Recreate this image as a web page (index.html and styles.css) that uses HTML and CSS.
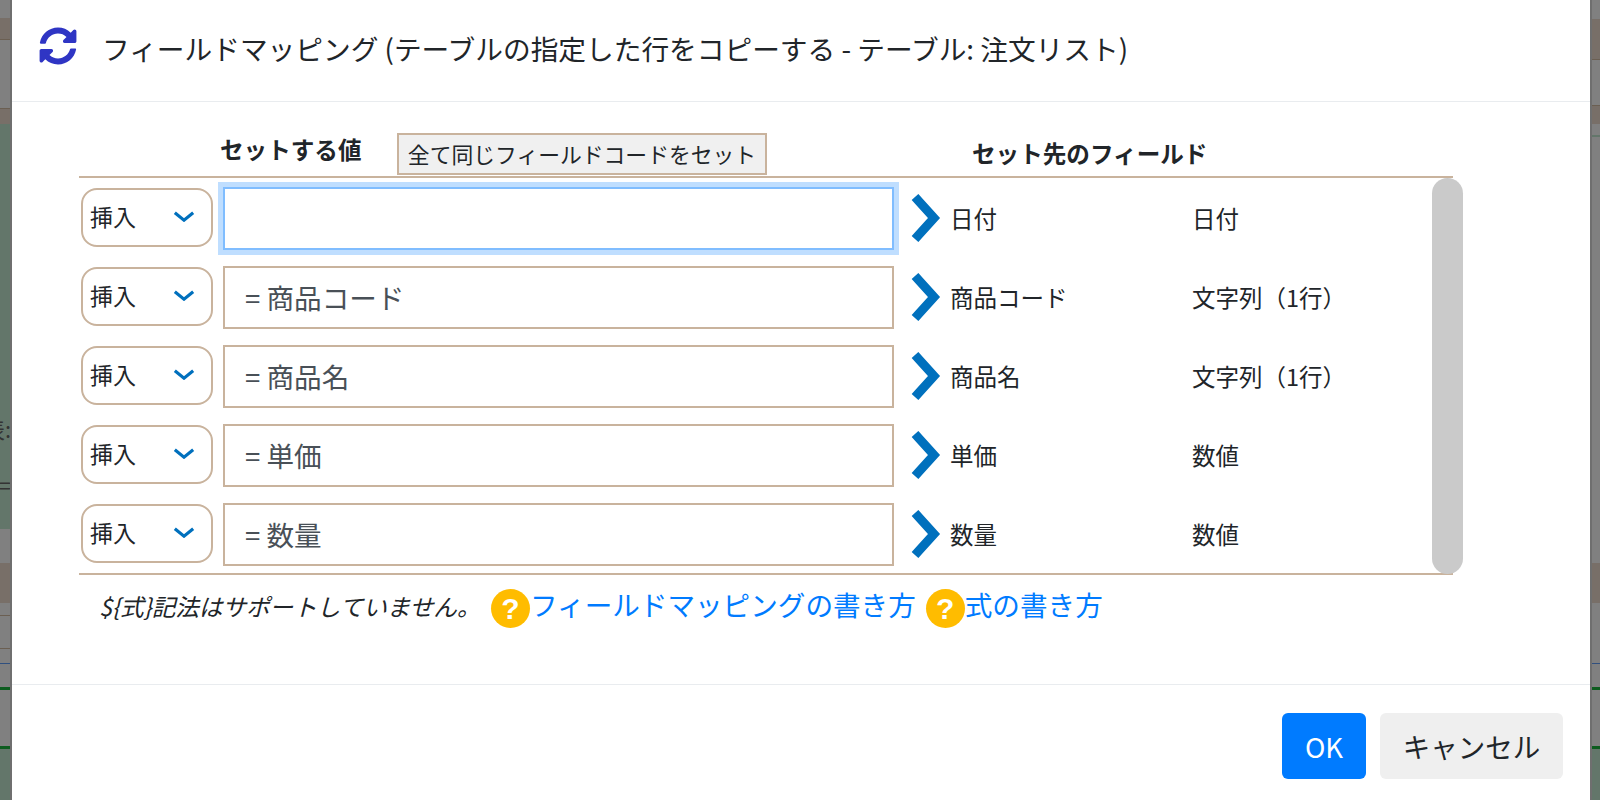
FILE: index.html
```html
<!DOCTYPE html>
<html lang="ja">

<head>
    <meta charset="UTF-8">
    <title>フィールドマッピング</title>
    <link rel="stylesheet" href="styles.css">
</head>

<body>
    <div class="backdrop">
        <div class="left-strip">
            <span class="strip-text strip-text-a">表:</span>
            <span class="strip-text strip-text-b">=</span>
        </div>
        <div class="dialog">
            <div class="dialog-header">
                <svg class="sync-icon" viewBox="0 0 512 512">
                    <path d="M370.7 133.3C339.5 104 298.9 88 255.800 88c-77.500.1-144.300 53.200-162.800 126.900-1.300 5.400-6.100 9.200-11.700 9.200H24.100c-7.500 0-13.200-6.800-11.800-14.200C33.900 94.900 134.800 8 256 8c66.400 0 126.800 26.100 171.300 68.700L463 41c15.100-15.100 41-4.400 41 17v134c0 13.300-10.700 24-24 24H346c-21.400 0-32.100-25.900-17-41l41.700-41.700zM32 296h134c21.400 0 32.100 25.900 17 41l-41.700 41.700c31.200 29.300 71.800 45.300 114.900 45.300 77.400-.1 144.300-53.100 162.800-126.800 1.300-5.400 6.100-9.200 11.700-9.200h57.300c7.500 0 13.200 6.800 11.800 14.200C478.100 417.100 377.200 504 256 504c-66.400 0-126.800-26.100-171.300-68.700L49 471c-15.100 15.100-41 4.400-41-17V320c0-13.300 10.700-24 24-24z" />
                </svg>
                <h1>フィールドマッピング (テーブルの指定した行をコピーする - テーブル: 注文リスト)</h1>
            </div>

            <div class="dialog-body">
                <div class="mapping-head">
                    <span class="head-value">セットする値</span>
                    <button class="copy-code">全て同じフィールドコードをセット</button>
                    <span class="head-target">セット先のフィールド</span>
                </div>

                <div class="mapping-list">
                    <div class="rows">
                        <div class="row">
                            <div class="op-select"><span>挿入</span><svg class="caret" viewBox="0 0 24 12"><path d="M2 2l10 8 10-8" /></svg></div>
                            <div class="value-box focused"></div>
                            <svg class="arrow" viewBox="0 0 30 48"><path d="M4 3l19 21L4 45" /></svg>
                            <span class="field-name">日付</span>
                            <span class="field-type">日付</span>
                        </div>
                        <div class="row">
                            <div class="op-select"><span>挿入</span><svg class="caret" viewBox="0 0 24 12"><path d="M2 2l10 8 10-8" /></svg></div>
                            <div class="value-box">= 商品コード</div>
                            <svg class="arrow" viewBox="0 0 30 48"><path d="M4 3l19 21L4 45" /></svg>
                            <span class="field-name">商品コード</span>
                            <span class="field-type">文字列（1行）</span>
                        </div>
                        <div class="row">
                            <div class="op-select"><span>挿入</span><svg class="caret" viewBox="0 0 24 12"><path d="M2 2l10 8 10-8" /></svg></div>
                            <div class="value-box">= 商品名</div>
                            <svg class="arrow" viewBox="0 0 30 48"><path d="M4 3l19 21L4 45" /></svg>
                            <span class="field-name">商品名</span>
                            <span class="field-type">文字列（1行）</span>
                        </div>
                        <div class="row">
                            <div class="op-select"><span>挿入</span><svg class="caret" viewBox="0 0 24 12"><path d="M2 2l10 8 10-8" /></svg></div>
                            <div class="value-box">= 単価</div>
                            <svg class="arrow" viewBox="0 0 30 48"><path d="M4 3l19 21L4 45" /></svg>
                            <span class="field-name">単価</span>
                            <span class="field-type">数値</span>
                        </div>
                        <div class="row">
                            <div class="op-select"><span>挿入</span><svg class="caret" viewBox="0 0 24 12"><path d="M2 2l10 8 10-8" /></svg></div>
                            <div class="value-box">= 数量</div>
                            <svg class="arrow" viewBox="0 0 30 48"><path d="M4 3l19 21L4 45" /></svg>
                            <span class="field-name">数量</span>
                            <span class="field-type">数値</span>
                        </div>
                    </div>
                    <div class="scroll-thumb"></div>
                </div>

                <div class="mapping-note">
                    <em>${式}記法はサポートしていません。</em>
                    <span class="help-icon">?</span><a href="#">フィールドマッピングの書き方</a>
                    <span class="help-icon second">?</span><a href="#">式の書き方</a>
                </div>
            </div>

            <div class="dialog-footer">
                <button class="btn-ok">OK</button>
                <button class="btn-cancel">キャンセル</button>
            </div>
        </div>
        <div class="right-strip"></div>
    </div>
</body>

</html>
```

FILE: styles.css
```css
* {
    box-sizing: border-box;
}

html,
body {
    height: 100%;
}

body {
    margin: 0;
    overflow: hidden;
    font-family: "Noto Sans CJK JP", "Noto Sans", sans-serif;
    color: #212529;
    background-color: #808080;
}

.backdrop {
    display: flex;
    height: 800px;
}

/* dimmed page behind the dialog */
.left-strip {
    position: relative;
    width: 12px;
    overflow: hidden;
    border-right: 2px solid #6f6f6f;
    background: linear-gradient(to bottom,
            #808080 0 18px,
            #786f68 18px 39px,
            #6b5f52 39px 40px,
            #808080 40px 108px,
            #6b5f52 108px 109px,
            #786f68 109px 124px,
            #63766a 124px 529px,
            #808080 529px 563px,
            #786f68 563px 603px,
            #808080 603px 615px,
            #6b5f52 615px 616px,
            #808080 616px 648px,
            #6b5f52 648px 649px,
            #808080 649px 663px,
            #30507f 663px 664px,
            #808080 664px 687px,
            #0d5c1f 687px 690px,
            #808080 690px 746px,
            #0d5c1f 746px 749px,
            #63766a 749px 800px);
}

.strip-text {
    position: absolute;
    right: -1px;
    font-size: 22px;
    line-height: 24px;
    color: #333;
}

.strip-text-a {
    top: 416px;
}

.strip-text-b {
    top: 472px;
}

.right-strip {
    width: 10px;
    border-left: 2px solid #6f6f6f;
    background: linear-gradient(to bottom,
            #808080 0 19px,
            #786f68 19px 59px,
            #6b5f52 59px 60px,
            #808080 60px 105px,
            #6b5f52 105px 106px,
            #786f68 106px 124px,
            #808080 124px 135px,
            #63766a 135px 137px,
            #808080 137px 563px,
            #786f68 563px 603px,
            #808080 603px 663px,
            #30507f 663px 664px,
            #808080 664px 687px,
            #0d5c1f 687px 690px,
            #808080 690px 746px,
            #0d5c1f 746px 749px,
            #63766a 749px 800px);
}

.dialog {
    width: 1578px;
    height: 800px;
    background-color: #fff;
    display: flex;
    flex-direction: column;
}

.dialog-header {
    height: 102px;
    padding: 0 27px;
    display: flex;
    align-items: center;
    gap: 25px;
    border-bottom: 1px solid #e9ecef;
}

.sync-icon {
    width: 38px;
    height: 38px;
    fill: #2f35c4;
    margin-top: -10px;
}

h1 {
    margin: -6px 0 0;
    font-size: 27.7px;
    font-weight: 400;
    color: #212529;
    white-space: nowrap;
}

.dialog-body {
    flex: 1;
    padding: 30px 0 0 67px;
}

.mapping-head {
    width: 1374px;
    height: 46px;
    display: flex;
    align-items: center;
    border-bottom: 2px solid #c9b39d;
    font-weight: 700;
    font-size: 23.6px;
}

.head-value {
    margin-left: 141px;
    margin-bottom: 10px;
    width: 177px;
}

.copy-code {
    width: 370px;
    height: 42px;
    margin-bottom: 1px;
    padding: 0;
    font-family: inherit;
    font-size: 21.8px;
    color: #212529;
    background-color: #f0f0f0;
    border: 2px solid #c9b39d;
}

.head-target {
    margin-left: 205px;
    margin-bottom: 3px;
}

.mapping-list {
    position: relative;
    width: 1384px;
}

.rows {
    width: 1374px;
    border-bottom: 2px solid #c9b39d;
}

.row {
    height: 79px;
    display: flex;
    align-items: center;
    font-size: 23.5px;
}

.op-select {
    width: 132px;
    height: 59px;
    margin-left: 2px;
    padding: 0 8px 0 7px;
    display: flex;
    align-items: center;
    justify-content: space-between;
    font-size: 23px;
    color: #212529;
    border: 2px solid #c9b39d;
    border-radius: 16px;
}

.op-select span {
    margin-bottom: 4px;
}

.caret {
    width: 22px;
    height: 11px;
    margin-right: 8px;
    margin-bottom: 2px;
    fill: none;
    stroke: #0070bd;
    stroke-width: 3.5;
}

.value-box {
    width: 671px;
    height: 63px;
    margin-left: 10px;
    margin-top: 1px;
    padding-left: 20px;
    display: flex;
    align-items: center;
    font-size: 27.6px;
    color: #495057;
    border: 2px solid #c9b39d;
}

.value-box.focused {
    border-color: #80bdff;
    box-shadow: 0 0 0 5px #bfdeff;
}

.arrow {
    width: 30px;
    height: 48px;
    margin-left: 17px;
    fill: none;
    stroke: #0070bd;
    stroke-width: 9;
}

.field-name {
    width: 242px;
    margin-left: 9px;
}

.scroll-thumb {
    position: absolute;
    top: 0;
    right: 0;
    width: 31px;
    height: 396px;
    background-color: #cacaca;
    border-radius: 16px;
}

.mapping-note {
    padding: 14px 0 0 20px;
    display: flex;
    align-items: center;
}

.mapping-note em {
    width: 392px;
    margin-top: -6px;
    font-size: 23.6px;
    white-space: nowrap;
}

.mapping-note a {
    font-size: 27.6px;
    color: #007bff;
    text-decoration: none;
    margin-top: -10px;
    white-space: nowrap;
}

.help-icon {
    width: 39px;
    height: 39px;
    display: flex;
    align-items: center;
    justify-content: center;
    border-radius: 50%;
    font-family: "Liberation Sans", sans-serif;
    font-size: 30px;
    font-weight: 700;
    color: #fff;
    background-color: #ffbc00;
}

.help-icon.second {
    margin-left: 10px;
}

.dialog-footer {
    height: 116px;
    padding: 28px 27px 0 0;
    display: flex;
    justify-content: flex-end;
    align-items: flex-start;
    gap: 14px;
    border-top: 1px solid #e9ecef;
}

.dialog-footer button {
    height: 66px;
    padding: 0;
    border: none;
    border-radius: 6px;
    font-family: inherit;
    font-size: 27.5px;
    white-space: nowrap;
}

.btn-ok {
    width: 84px;
    color: #fff;
    background-color: #007bff;
}

.btn-cancel {
    width: 183px;
    color: #212529;
    background-color: #efefef;
}
```
